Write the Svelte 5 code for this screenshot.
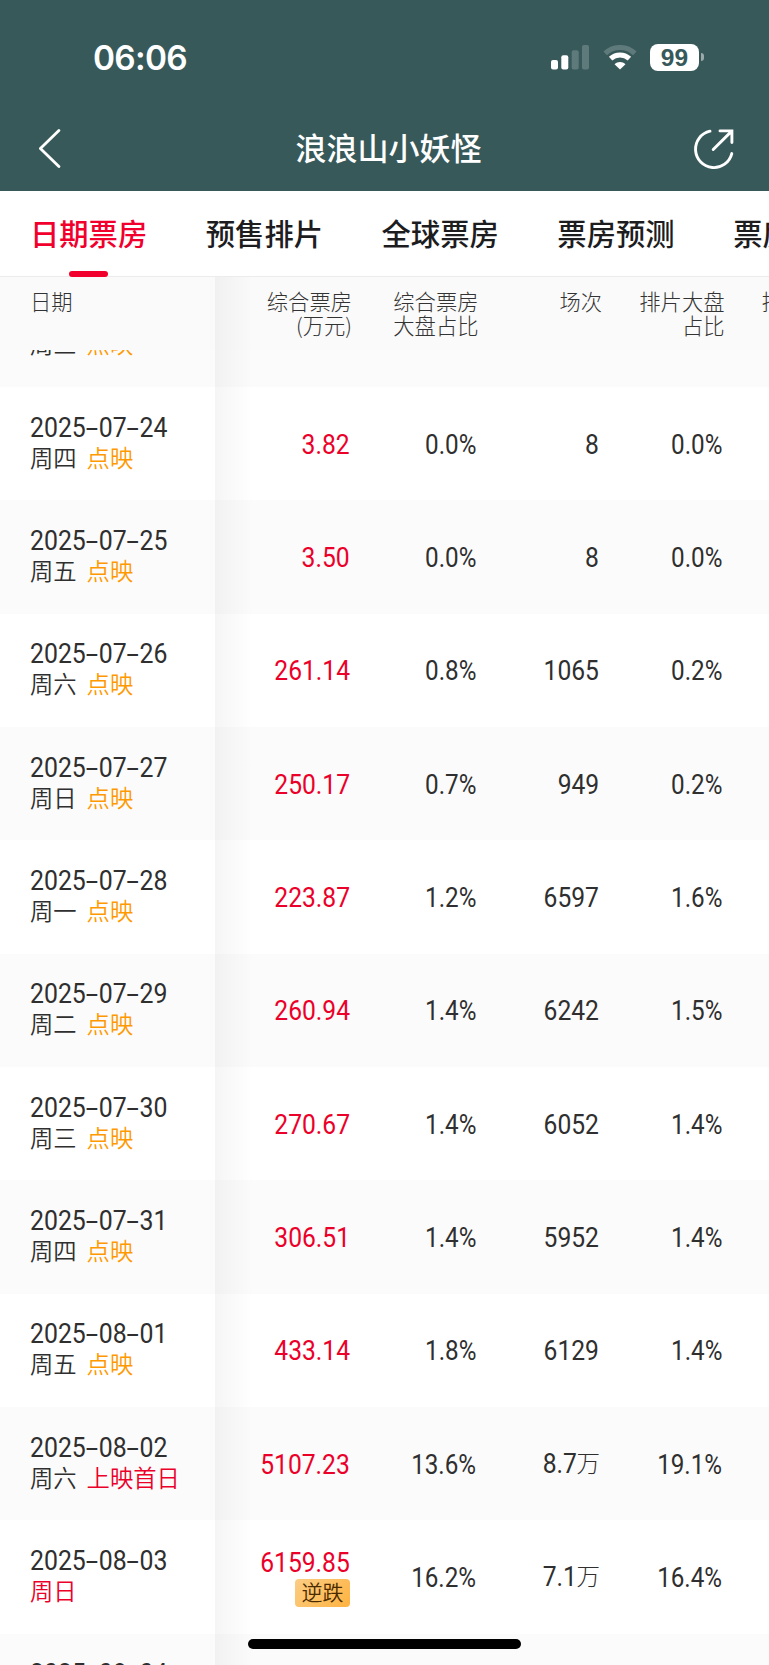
<script>
    let activeTab = 0;
    const tabs = ["日期票房", "预售排片", "全球票房", "票房预测", "票房趋势"];

    const columns = [
        ["综合票房", "(万元)"],
        ["综合票房", "大盘占比"],
        ["场次"],
        ["排片大盘", "占比"],
    ];

    const rows = [
        { date: "", week: "周三", tag: "点映", box: "", share: "", shows: "", rate: "" },
        { date: "2025-07-24", week: "周四", tag: "点映", box: "3.82", share: "0.0%", shows: "8", rate: "0.0%" },
        { date: "2025-07-25", week: "周五", tag: "点映", box: "3.50", share: "0.0%", shows: "8", rate: "0.0%" },
        { date: "2025-07-26", week: "周六", tag: "点映", box: "261.14", share: "0.8%", shows: "1065", rate: "0.2%" },
        { date: "2025-07-27", week: "周日", tag: "点映", box: "250.17", share: "0.7%", shows: "949", rate: "0.2%" },
        { date: "2025-07-28", week: "周一", tag: "点映", box: "223.87", share: "1.2%", shows: "6597", rate: "1.6%" },
        { date: "2025-07-29", week: "周二", tag: "点映", box: "260.94", share: "1.4%", shows: "6242", rate: "1.5%" },
        { date: "2025-07-30", week: "周三", tag: "点映", box: "270.67", share: "1.4%", shows: "6052", rate: "1.4%" },
        { date: "2025-07-31", week: "周四", tag: "点映", box: "306.51", share: "1.4%", shows: "5952", rate: "1.4%" },
        { date: "2025-08-01", week: "周五", tag: "点映", box: "433.14", share: "1.8%", shows: "6129", rate: "1.4%" },
        { date: "2025-08-02", week: "周六", tag: "上映首日", first: true, box: "5107.23", share: "13.6%", shows: "8.7", unit: "万", rate: "19.1%" },
        { date: "2025-08-03", week: "周日", holiday: true, box: "6159.85", badge: "逆跌", share: "16.2%", shows: "7.1", unit: "万", rate: "16.4%" },
        { date: "2025-08-04", week: "", box: "", share: "", shows: "", rate: "" },
    ];
</script>

<main>
    <header>
        <div class="status">
            <div class="time">06:06</div>
            <div class="status-icons">
                <svg class="signal" width="38" height="25" viewBox="0 0 38 25" fill="#fff">
                    <rect x="0" y="15" width="7" height="9.5" rx="2" />
                    <rect x="10.3" y="10.3" width="7" height="14.2" rx="2" />
                    <rect x="20.7" y="5.2" width="7" height="19.3" rx="2" opacity=".2" />
                    <rect x="31" y="0" width="7" height="24.5" rx="2" opacity=".2" />
                </svg>
                <svg class="wifi" width="34" height="25" viewBox="0 0 34 25">
                    <path d="M2.2 8.4C10.4 .5 23.6 .5 31.8 8.4" fill="none" stroke="#fff" stroke-width="5" opacity=".2" />
                    <path d="M7.6 13.7C13 8.7 21 8.7 26.4 13.7" fill="none" stroke="#fff" stroke-width="5" />
                    <path d="M17 24.5L11.5 19.2C14.6 16.3 19.4 16.3 22.5 19.2Z" fill="#fff" />
                </svg>
                <div class="battery">99</div>
                <div class="battery-tip"></div>
            </div>
        </div>
        <div class="nav">
            <svg width="24" height="42" viewBox="0 0 24 42" fill="none" stroke="#fff" stroke-width="2.8" stroke-linecap="round" stroke-linejoin="round">
                <path d="M19.9 2.5L1.4 20.5L19.9 38.5" />
            </svg>
            <h1>浪浪山小妖怪</h1>
            <svg width="42" height="42" viewBox="0 0 42 42" fill="none" stroke="#fff" stroke-width="2.9" stroke-linecap="round">
                <path d="M17 3.2A18.4 18.4 0 1 0 38.8 25.6" />
                <path d="M27 2.9H38.9V14.6M38.7 3.1L20.2 21.5" />
            </svg>
        </div>
    </header>

    <nav class="tabs">
        {#each tabs as tab, i}
            <button class:active={activeTab === i} on:click={() => (activeTab = i)}>{tab}</button>
        {/each}
    </nav>

    <div class="grid table-head">
        <div class="head-date">日期</div>
        {#each columns as lines}
            <div class="head-cell">
                {#each lines as line}<div>{line}</div>{/each}
            </div>
        {/each}
        <div class="head-next">排片</div>
    </div>

    <div class="table-body">
        <div class="rows">
            {#each rows as row}
                <div class="grid row">
                    <div class="date-cell">
                        <div class="num date">{#each row.date.split("-") as part, i}{#if i > 0}<span class="dash">-</span>{/if}{part}{/each}</div>
                        <div class="week">
                            <span class:red={row.holiday}>{row.week}</span>
                            {#if row.tag}<span class="tag" class:red={row.first}>{row.tag}</span>{/if}
                        </div>
                    </div>
                    <div class="cell box red">
                        <span class="num">{row.box}</span>
                        {#if row.badge}<span class="badge">{row.badge}</span>{/if}
                    </div>
                    <div class="cell"><span class="num percent">{row.share}</span></div>
                    <div class="cell">
                        {#if row.unit}
                            <div class="with-unit"><span class="num">{row.shows}</span><span class="unit">{row.unit}</span></div>
                        {:else}
                            <span class="num">{row.shows}</span>
                        {/if}
                    </div>
                    <div class="cell"><span class="num percent">{row.rate}</span></div>
                </div>
            {/each}
        </div>
    </div>

    <div class="home-bar"></div>
</main>

<style>
    :global(body){
        background-color: #ffffff;
    }
    main{
        position: relative;
        display: flex;
        flex-direction: column;
        width: 769px;
        height: 1665px;
        overflow: hidden;
        color: #2f2f2f;
        font-family: "Noto Sans CJK SC", sans-serif;
    }
    header{
        flex: none;
        height: 191px;
        background-color: #38595a;
        color: #ffffff;
    }
    .status{
        display: flex;
        justify-content: space-between;
        align-items: center;
        height: 114px;
        padding: 0 65px 0 93px;
    }
    .time{
        padding-top: 2px;
        font-family: Inter, sans-serif;
        font-size: 33.4px;
        font-weight: 600;
        letter-spacing: -0.7px;
    }
    .status-icons{
        display: flex;
        align-items: center;
    }
    .signal{
        margin-right: 14px;
    }
    .wifi{
        margin-right: 13px;
    }
    .battery{
        width: 49px;
        height: 27px;
        border-radius: 8px;
        background-color: #ffffff;
        color: #38595a;
        font-family: "Liberation Sans", sans-serif;
        font-size: 24.5px;
        font-weight: 700;
        line-height: 28px;
        text-align: center;
    }
    .battery-tip{
        width: 3px;
        height: 8px;
        margin-left: 2px;
        border-radius: 0 4px 4px 0;
        background-color: #9aaaab;
    }
    .nav{
        display: flex;
        justify-content: space-between;
        align-items: center;
        height: 70px;
        padding: 0 34px 0 39px;
    }
    h1{
        margin: 0 0 4px 21px;
        font-size: 31px;
        font-weight: 500;
        line-height: 40px;
    }
    .tabs{
        display: flex;
        flex: none;
        gap: 58.6px;
        height: 85px;
        padding-left: 30px;
        border-bottom: 1px solid #ececec;
    }
    .tabs button{
        position: relative;
        flex: none;
        padding: 0 0 4px;
        border: none;
        background: none;
        color: #1d1d1f;
        font-family: inherit;
        font-size: 29.3px;
        font-weight: 500;
        line-height: 80px;
    }
    .tabs .active{
        color: #f1002d;
    }
    .tabs .active::after{
        content: "";
        position: absolute;
        left: 39px;
        bottom: -1px;
        width: 39px;
        height: 6px;
        border-radius: 3px;
        background-color: #f1002d;
    }
    .grid{
        display: grid;
        grid-template-columns: 215px 137px 126.5px 123.5px 122.5px 1fr;
        /* shadow cast by the fixed date column */
        background-image: linear-gradient(to right, rgba(0, 0, 0, 0.04), rgba(0, 0, 0, 0));
        background-position: 215px 0;
        background-size: 38px 100%;
        background-repeat: no-repeat;
    }
    .table-head{
        flex: none;
        box-sizing: border-box;
        height: 73px;
        padding-top: 12px;
        overflow: hidden;
        background-color: #fafafa;
        color: #333333;
        font-size: 21.3px;
        font-weight: 300;
        line-height: 23.6px;
    }
    .head-date{
        padding-left: 30px;
    }
    .head-cell{
        text-align: right;
    }
    .head-next{
        padding-left: 37px;
        white-space: nowrap;
    }
    .table-body{
        flex: 1;
        min-height: 0;
        overflow: hidden;
    }
    .rows{
        margin-top: -76.5px;
    }
    .row{
        height: 113.35px;
        background-color: #ffffff;
    }
    .row:nth-child(odd){
        background-color: #fbfbfb;
    }
    .date-cell{
        display: flex;
        flex-direction: column;
        justify-content: center;
        padding: 0 0 3px 30px;
    }
    .num{
        display: inline-block;
        font-family: Roboto, sans-serif;
        font-size: 28px;
        line-height: 32px;
        transform: scaleX(0.88);
        transform-origin: right;
        white-space: nowrap;
    }
    .percent{
        margin-right: -1px;
        transform: scaleX(0.865);
    }
    .date{
        height: 32px;
        transform: scaleX(0.887);
        transform-origin: left;
    }
    .dash{
        display: inline-block;
        margin: 0 3.4px;
        transform: scaleX(1.8);
    }
    .week{
        display: flex;
        gap: 10px;
        height: 29px;
        font-size: 23.3px;
        font-weight: 350;
        line-height: 26px;
    }
    .tag{
        color: #ff9900;
    }
    .red, .red .num{
        color: #eb0029;
    }
    .cell{
        display: flex;
        flex-direction: column;
        justify-content: center;
        align-items: flex-end;
        padding: 2px 3px 0 0;
    }
    .box{
        padding-right: 2px;
    }
    .with-unit{
        display: flex;
        align-items: center;
        margin: -2px -1px 0 0;
    }
    .unit{
        margin-top: -4px;
        font-size: 23.5px;
        font-weight: 300;
        line-height: 32px;
    }
    .badge{
        width: 55px;
        height: 28px;
        margin-bottom: 2px;
        border-radius: 4px;
        background-image: linear-gradient(135deg, #fbcd85, #ffb340);
        color: #4a2a00;
        font-size: 21px;
        font-weight: 350;
        line-height: 25px;
        text-align: center;
    }
    .home-bar{
        position: absolute;
        left: 248px;
        bottom: 16px;
        width: 273px;
        height: 10px;
        border-radius: 5px;
        background-color: #000000;
    }
</style>
